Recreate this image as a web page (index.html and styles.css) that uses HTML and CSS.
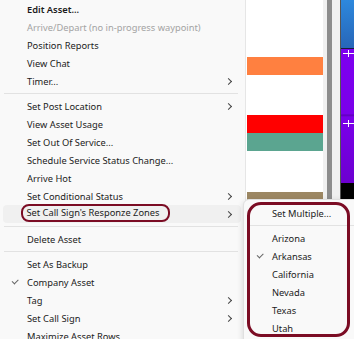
FILE: index.html
```html
<!DOCTYPE html>
<html lang="en">
<head>
    <meta charset="UTF-8">
    <meta name="viewport" content="width=device-width, initial-scale=1.0">
    <title>Asset Context Menu</title>
    <link rel="stylesheet" href="styles.css">
</head>
<body>
    <div class="screen">
        <!-- main context menu -->
        <div class="menu">
            <div class="item bold">Edit Asset...</div>
            <div class="item disabled">Arrive/Depart (no in-progress waypoint)</div>
            <div class="item">Position Reports</div>
            <div class="item">View Chat</div>
            <div class="item sub">Timer...</div>
            <div class="sep"></div>
            <div class="item sub">Set Post Location</div>
            <div class="item">View Asset Usage</div>
            <div class="item">Set Out Of Service...</div>
            <div class="item">Schedule Service Status Change...</div>
            <div class="item">Arrive Hot</div>
            <div class="item sub">Set Conditional Status</div>
            <div class="item sub active">
                <span class="callout">Set Call Sign's Responze Zones</span>
            </div>
            <div class="sep"></div>
            <div class="item">Delete Asset</div>
            <div class="sep"></div>
            <div class="item">Set As Backup</div>
            <div class="item checked">Company Asset</div>
            <div class="item sub">Tag</div>
            <div class="item sub">Set Call Sign</div>
            <div class="item">Maximize Asset Rows</div>
        </div>

        <!-- asset rows behind the menu -->
        <div class="rows">
            <div class="bar orange"></div>
            <div class="bar red"></div>
            <div class="bar teal"></div>
            <div class="bar tan"></div>
        </div>

        <div class="scroll">
            <div class="scroll-track"></div>
            <div class="scroll-thumb"></div>
            <div class="scroll-track wide"></div>
        </div>

        <div class="timeline">
            <div class="band blue"></div>
            <div class="band purple">
                <span class="tick"></span>
                <span class="tick low"></span>
            </div>
            <div class="band black"></div>
        </div>

        <!-- zone submenu -->
        <div class="submenu">
            <div class="item">Set Multiple...</div>
            <div class="sep"></div>
            <div class="item">Arizona</div>
            <div class="item checked">Arkansas</div>
            <div class="item">California</div>
            <div class="item">Nevada</div>
            <div class="item">Texas</div>
            <div class="item">Utah</div>
            <div class="ring"></div>
        </div>
    </div>
</body>
</html>
```

FILE: styles.css
```css
:root {
    --menu-bg: #f9f9f9;
    --text: #1b1b1b;
    --muted: #a3a3a3;
    --line: #e2e2e2;
    --mark: #7b0c24;
}

body {
    margin: 0;
    font-family: 'Noto Sans', 'Open Sans', sans-serif;
    font-size: 9.3px;
    color: var(--text);
    background: #fff;
}

.screen {
    position: relative;
    display: flex;
    width: 354px;
    height: 339px;
    overflow: hidden;
}

.menu {
    width: 246px;
    flex: none;
    background: var(--menu-bg);
    border-right: 1px solid #e6e6e6;
    box-sizing: border-box;
    padding: 0 4px 0 3px;
}

.item {
    position: relative;
    display: flex;
    align-items: center;
    height: 18px;
    padding-left: 24px;
    white-space: nowrap;
}

.item.bold {
    font-weight: 600;
}

.item.disabled {
    color: var(--muted);
}

.item.sub::after {
    content: '';
    position: absolute;
    right: 10px;
    top: 7px;
    width: 4px;
    height: 4px;
    border-top: 1.3px solid #444;
    border-right: 1.3px solid #444;
    transform: rotate(45deg);
}

.item.checked::before {
    content: '';
    position: absolute;
    left: 9px;
    top: 6px;
    width: 5px;
    height: 2.5px;
    border-left: 1px solid #666;
    border-bottom: 1px solid #666;
    transform: rotate(-45deg);
}

.item.active {
    background: #f0f0f0;
    border-radius: 4px;
}

.callout {
    box-sizing: border-box;
    width: 149px;
    height: 18px;
    margin: -2px 0 0 -6px;
    padding-left: 3.5px;
    line-height: 13px;
    border: 2.5px solid var(--mark);
    border-radius: 8px;
}

.sep {
    height: 7px;
    margin-right: 3px;
    background: linear-gradient(var(--line), var(--line)) center / 100% 1px no-repeat;
}

.menu .sep {
    margin-left: 1px;
}

.rows {
    width: 77px;
    flex: none;
    padding-left: 1px;
    box-sizing: border-box;
    padding-top: 57px;
}

.bar {
    height: 18px;
}

.orange {
    background: #ff8040;
}

.red {
    margin-top: 40px;
    background: #ff0000;
}

.teal {
    background: #5ba590;
}

.tan {
    margin-top: 41px;
    height: 10px;
    background: #9c8763;
}

.scroll {
    display: flex;
    flex: none;
}

.scroll-track {
    width: 4px;
    background: #f0f0f0;
}

.scroll-track.wide {
    width: 8px;
    border-right: 1px solid #555;
}

.scroll-thumb {
    width: 5px;
    background: #8c8c8c;
}

.timeline {
    flex: 1;
    display: flex;
    flex-direction: column;
}

.band.blue {
    height: 48px;
    background: linear-gradient(#2d88dd, #2766b8);
    border-bottom: 1px solid #1a1a3a;
}

.band.purple {
    position: relative;
    height: 134px;
    background: linear-gradient(#7d00f0 0, #7a00ea 65px, #5c00b8 66px, #7a00ea 68px, #6c00d0 100%);
}

.tick {
    position: absolute;
    left: 2px;
    top: 4px;
    width: 12px;
    height: 1px;
    background: #fff;
}

.tick::after {
    content: '';
    position: absolute;
    left: 5px;
    top: -3px;
    width: 1px;
    height: 7px;
    background: #fff;
}

.tick.low {
    top: 74px;
}

.band.black {
    flex: 1;
    background: #000;
}

.submenu {
    position: absolute;
    left: 243px;
    top: 199px;
    width: 120px;
    height: 150px;
    box-sizing: border-box;
    padding: 4px 0 0 4px;
    background: var(--menu-bg);
    border: 1px solid #e0e0e0;
    border-radius: 6px;
    box-shadow: 0 2px 6px rgba(0, 0, 0, 0.15);
}

.submenu .sep {
    margin-right: 0;
}

.ring {
    position: absolute;
    left: 3px;
    top: 2px;
    width: 103px;
    height: 135px;
    box-sizing: border-box;
    border: 3px solid var(--mark);
    border-radius: 14px;
}
```
